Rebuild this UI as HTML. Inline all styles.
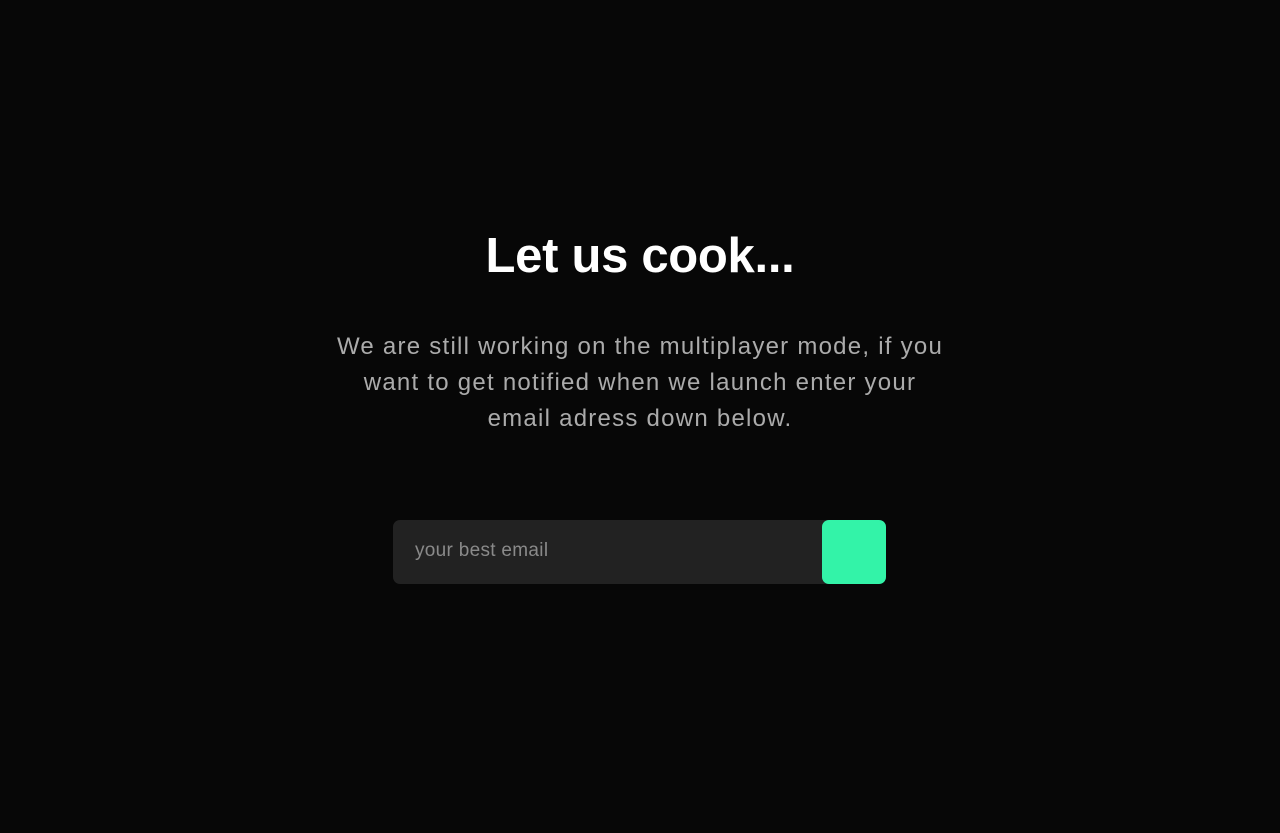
<!DOCTYPE html>
<html><head><style>
html,body{margin:0;padding:0;background:#070707;width:1280px;height:833px;overflow:hidden;font-family:"Liberation Sans",sans-serif}
h1{position:absolute;left:0;width:1280px;top:226px;margin:0;text-align:center;color:#fff;font-size:49px;font-weight:bold;line-height:60px;letter-spacing:-0.3px}
p{position:absolute;left:240px;width:800px;top:329px;margin:0;text-align:center;color:#ababab;font-size:24px;line-height:36px;letter-spacing:1.25px;white-space:nowrap}
.in{position:absolute;left:393px;top:520px;width:460px;height:64px;background:#222;border-radius:7px}
.in span{position:absolute;left:22px;top:20px;color:#8a8a8a;font-size:19px;letter-spacing:0.3px}
.btn{position:absolute;left:822px;top:520px;width:64px;height:64px;background:#33f3a8;border-radius:7px}
</style></head><body>
<h1>Let us cook...</h1>
<p>We are still working on the multiplayer mode, if you<br>want to get notified when we launch enter your<br>email adress down below.</p>
<div class="in"><span>your best email</span></div>
<div class="btn"></div>
</body></html>
